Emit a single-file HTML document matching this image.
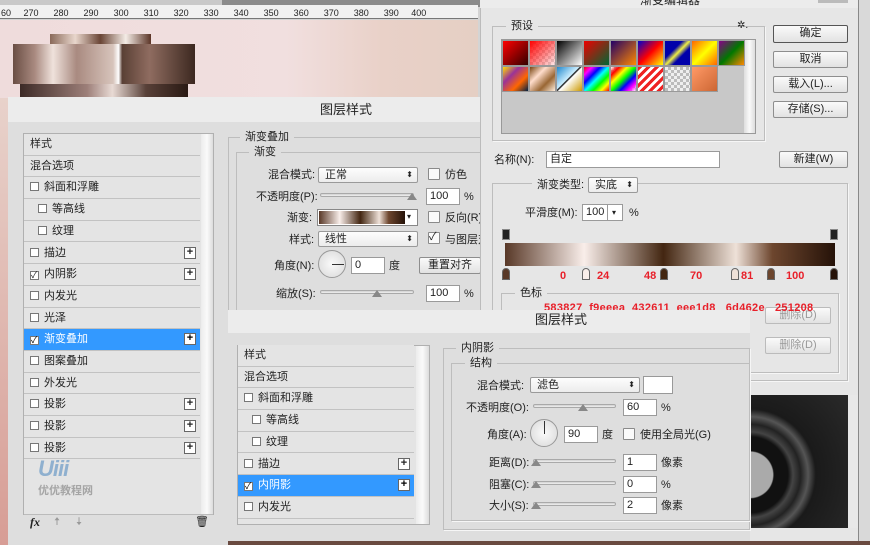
<!DOCTYPE html>
<html><head><meta charset="utf-8">
<style>
*{box-sizing:border-box;margin:0;padding:0}
body{width:870px;height:545px;position:relative;overflow:hidden;background:#d4d4d4;font-family:"Liberation Sans","Noto Sans CJK SC",sans-serif;font-size:11px;color:#222}
.a{position:absolute}
.t{position:absolute;white-space:nowrap;line-height:12px}
.fs{position:absolute;border:1px solid #bdbdbd;box-shadow:1px 1px 0 #f6f6f6}
.lg{position:absolute;background:inherit;padding:0 5px;line-height:12px}
.in{position:absolute;background:#fff;border:1px solid #9a9a9a;height:17px;line-height:15px;padding-left:3px}
.btn{position:absolute;border:1px solid #8e8e8e;border-radius:2px;background:linear-gradient(#fafafa,#e2e2e2);text-align:center;line-height:15px;height:17px}
.sel{position:absolute;border:1px solid #9a9a9a;border-radius:2px;background:linear-gradient(#fdfdfd,#ececec);height:16px;line-height:14px;padding-left:6px}
.sel:after{content:"⬍";position:absolute;right:4px;top:0;font-size:8px}
.cb{position:absolute;width:12px;height:12px;border:1px solid #8a8a8a;background:#fafafa;border-radius:1px}
.sl{position:absolute;height:4px;border:1px solid #a9a9a9;border-radius:2px;background:linear-gradient(#d0d0d0,#f0f0f0)}
.tri{position:absolute;width:0;height:0;border-left:5px solid transparent;border-right:5px solid transparent;border-bottom:7px solid #888}
.row{position:absolute;left:0;width:176px;height:21.7px;border-bottom:1px solid #c2c2c2;background:#e4e4e4;line-height:21px;padding-left:6px}
.row .c{display:inline-block;width:9px;height:9px;border:1px solid #777;background:#fff;margin-right:5px;vertical-align:-1px}
.plus{position:absolute;right:4px;top:4px;width:12px;height:12px;border:1px solid #666;background:#fff;font-size:11px;line-height:9px;text-align:center;font-weight:bold}
.sel2{background:#3399ff;color:#fff}
.red{color:#e8202a;font-weight:bold;font-size:11px}
.sw{position:absolute;width:27px;height:26px;border:1px solid #999}
</style></head><body>

<div class="a" style="left:0;top:0;width:870px;height:7px;background:#8b8b8b"></div>
<div class="a" style="left:0;top:0;width:222px;height:5px;background:#c9c9c9"></div>
<div class="a" style="left:0;top:5px;width:478px;height:14px;background:#f1f1f1;border-bottom:1px solid #777"></div>
<div class="t" style="left:1px;top:7px;font-size:9px;letter-spacing:0">60&nbsp;&nbsp;&nbsp;&nbsp;&nbsp;270&nbsp;&nbsp;&nbsp;&nbsp;&nbsp;&nbsp;280&nbsp;&nbsp;&nbsp;&nbsp;&nbsp;&nbsp;290&nbsp;&nbsp;&nbsp;&nbsp;&nbsp;&nbsp;300&nbsp;&nbsp;&nbsp;&nbsp;&nbsp;&nbsp;310&nbsp;&nbsp;&nbsp;&nbsp;&nbsp;&nbsp;320&nbsp;&nbsp;&nbsp;&nbsp;&nbsp;&nbsp;330&nbsp;&nbsp;&nbsp;&nbsp;&nbsp;&nbsp;340&nbsp;&nbsp;&nbsp;&nbsp;&nbsp;&nbsp;350&nbsp;&nbsp;&nbsp;&nbsp;&nbsp;&nbsp;360&nbsp;&nbsp;&nbsp;&nbsp;&nbsp;&nbsp;370&nbsp;&nbsp;&nbsp;&nbsp;&nbsp;&nbsp;380&nbsp;&nbsp;&nbsp;&nbsp;&nbsp;&nbsp;390&nbsp;&nbsp;&nbsp;&nbsp;&nbsp;400</div>
<div class="a" style="left:0;top:20px;width:478px;height:78px;background:linear-gradient(90deg,#efdcdc 0%,#f1dfdf 60%,#e9d1c8 80%,#e5cfc4 100%)"></div>
<div class="a" style="left:0;top:98px;width:8px;height:447px;background:linear-gradient(#e8d2cb,#d79d95)"></div>
<div class="a" style="left:50px;top:34px;width:101px;height:11px;background:linear-gradient(90deg,#8a6a5a,#e8d6cc,#6a4535,#f4ece6,#5b3426)"></div>
<div class="a" style="left:13px;top:44px;width:182px;height:40px;background:linear-gradient(90deg,#6a4e44 0%,#a98a80 12%,#efe2dc 22%,#a98a80 35%,#d7c4bb 55%,#fff 58%,#5a4035 60%,#8f6c60 75%,#3c2820 100%)"></div>
<div class="a" style="left:20px;top:84px;width:168px;height:14px;background:linear-gradient(90deg,#3c2a26,#9d7f79 40%,#e8dad4 55%,#584038 75%,#2a1a14)"></div>

<div class="a" style="left:8px;top:97px;width:472px;height:448px;background:#dedede"></div>
<div class="a" style="left:8px;top:97px;width:472px;height:25px;background:#ececec"></div>
<div class="t" style="left:320px;top:104px;font-size:13px">图层样式</div>
<div class="a" style="left:23px;top:133px;width:191px;height:382px;border:1px solid #b0b0b0;background:#e4e4e4"></div>
<div class="a" style="left:201px;top:134px;width:12px;height:380px;background:linear-gradient(90deg,#ececec,#fafafa,#dcdcdc)"></div>
<div class="a" style="left:24px;top:134px;width:176px;height:330px">
<div class="row" style="top:0">样式</div>
<div class="row" style="top:21.7px">混合选项</div>
<div class="row" style="top:43.4px"><span class="c"></span>斜面和浮雕</div>
<div class="row" style="top:65.1px;padding-left:14px"><span class="c"></span>等高线</div>
<div class="row" style="top:86.8px;padding-left:14px"><span class="c"></span>纹理</div>
<div class="row" style="top:108.5px"><span class="c"></span>描边<span class="plus">+</span></div>
<div class="row" style="top:130.2px"><span class="c" style="font-size:9px;line-height:7px">✓</span>内阴影<span class="plus">+</span></div>
<div class="row" style="top:151.9px"><span class="c"></span>内发光</div>
<div class="row" style="top:173.6px"><span class="c"></span>光泽</div>
<div class="row sel2" style="top:195.3px"><span class="c" style="font-size:9px;line-height:7px;color:#000">✓</span>渐变叠加<span class="plus" style="color:#000">+</span></div>
<div class="row" style="top:217px"><span class="c"></span>图案叠加</div>
<div class="row" style="top:238.7px"><span class="c"></span>外发光</div>
<div class="row" style="top:260.4px"><span class="c"></span>投影<span class="plus">+</span></div>
<div class="row" style="top:282.1px"><span class="c"></span>投影<span class="plus">+</span></div>
<div class="row" style="top:303.8px"><span class="c"></span>投影<span class="plus">+</span></div>
</div>
<div class="t" style="left:38px;top:463px;font-size:22px;font-weight:bold;font-style:italic;color:#8fb0cf;letter-spacing:-1px">Uiii</div>
<div class="t" style="left:38px;top:485px;font-size:11px;font-weight:bold;color:#a5a5a5">优优教程网</div>
<div class="a" style="left:24px;top:514px;width:189px;height:1px;background:#bbb"></div>
<div class="t" style="left:30px;top:516px;font-size:12px;font-style:italic;font-weight:bold;font-family:'Liberation Serif',serif">fx</div>
<div class="t" style="left:54px;top:516px;color:#999">🠅</div>
<div class="t" style="left:76px;top:516px;color:#999">🠇</div>
<div class="t" style="left:195px;top:516px;">🗑</div>

<div class="fs" style="left:228px;top:137px;width:260px;height:175px;background:#dedede"></div>
<div class="lg" style="left:240px;top:131px;background:#dedede">渐变叠加</div>
<div class="fs" style="left:236px;top:152px;width:252px;height:160px;background:#dedede"></div>
<div class="lg" style="left:249px;top:146px;background:#dedede">渐变</div>
<div class="t" style="left:268px;top:169px">混合模式:</div>
<div class="sel" style="left:318px;top:167px;width:100px">正常</div>
<div class="cb" style="left:428px;top:168px"></div><div class="t" style="left:445px;top:169px">仿色</div>
<div class="t" style="left:256px;top:191px">不透明度(P):</div>
<div class="sl" style="left:320px;top:193px;width:94px"></div><div class="tri" style="left:407px;top:193px"></div>
<div class="in" style="left:426px;top:188px;width:34px">100</div><div class="t" style="left:464px;top:191px">%</div>
<div class="t" style="left:287px;top:212px">渐变:</div>
<div class="a" style="left:317px;top:209px;width:101px;height:17px;border:1px solid #888;background:#fff"><div style="position:absolute;left:1px;top:1px;width:86px;height:13px;background:linear-gradient(90deg,#583827 0%,#f9eeea 24%,#432611 48%,#eee1d8 70%,#6d462e 81%,#251208 100%)"></div><div class="t" style="left:89px;top:1px;font-size:8px">▾</div></div>
<div class="cb" style="left:428px;top:211px"></div><div class="t" style="left:445px;top:212px">反向(R)</div>
<div class="t" style="left:289px;top:234px">样式:</div>
<div class="sel" style="left:318px;top:231px;width:100px">线性</div>
<div class="cb" style="left:428px;top:232px;font-size:11px;line-height:9px">✓</div><div class="t" style="left:445px;top:234px">与图层对</div>
<div class="t" style="left:274px;top:260px">角度(N):</div>
<div class="a" style="left:318px;top:250px;width:28px;height:28px;border-radius:50%;border:1px solid #999;background:radial-gradient(#fafafa,#d8d8d8)"><div style="position:absolute;left:13px;top:13px;width:12px;height:1px;background:#333"></div></div>
<div class="in" style="left:351px;top:257px;width:34px">0</div><div class="t" style="left:389px;top:260px">度</div>
<div class="btn" style="left:419px;top:257px;width:62px">重置对齐</div>
<div class="t" style="left:276px;top:288px">缩放(S):</div>
<div class="sl" style="left:320px;top:290px;width:94px"></div><div class="tri" style="left:372px;top:290px"></div>
<div class="in" style="left:426px;top:285px;width:34px">100</div><div class="t" style="left:464px;top:288px">%</div>

<div class="a" style="left:480px;top:0;width:378px;height:395px;background:#e6e6e6;border-left:1px solid #bbb"></div>
<div class="a" style="left:480px;top:0;width:378px;height:8px;background:#ececec"></div>
<div class="t" style="left:640px;top:-6px;font-size:12px">渐变编辑器</div>
<div class="a" style="left:818px;top:0;width:30px;height:3px;background:#bbb"></div>
<div class="fs" style="left:492px;top:26px;width:273px;height:115px;background:#e6e6e6"></div>
<div class="lg" style="left:506px;top:20px;background:#e6e6e6">预设</div>
<div class="t" style="left:737px;top:20px;font-size:10px">✲.</div>
<div class="a" style="left:501px;top:39px;width:255px;height:95px;background:#c8c8c8;border:1px solid #999"></div>
<div class="a" style="left:744px;top:40px;width:11px;height:93px;background:linear-gradient(90deg,#ddd,#fafafa,#ddd)"></div>
<div class="sw" style="left:502px;top:40px;background:linear-gradient(135deg,#f00,#300)"></div>
<div class="sw" style="left:529px;top:40px;background:linear-gradient(135deg,#f00,rgba(255,200,200,.4)),repeating-conic-gradient(#ccc 0 25%,#fff 0 50%) 0 0/6px 6px"></div>
<div class="sw" style="left:556px;top:40px;background:linear-gradient(135deg,#000,#fff)"></div>
<div class="sw" style="left:583px;top:40px;background:linear-gradient(135deg,#e00,#063)"></div>
<div class="sw" style="left:610px;top:40px;background:linear-gradient(135deg,#206,#f80)"></div>
<div class="sw" style="left:637px;top:40px;background:linear-gradient(135deg,#00c,#f00,#ff0)"></div>
<div class="sw" style="left:664px;top:40px;background:linear-gradient(135deg,#00a 35%,#ee4 50%,#00a 65%)"></div>
<div class="sw" style="left:691px;top:40px;background:linear-gradient(135deg,#f60,#ff0,#f60)"></div>
<div class="sw" style="left:718px;top:40px;background:linear-gradient(135deg,#808,#070,#f80)"></div>
<div class="sw" style="left:502px;top:66px;background:linear-gradient(135deg,#fd0,#939,#f60,#024)"></div>
<div class="sw" style="left:529px;top:66px;background:linear-gradient(135deg,#741,#fdc,#963,#fed)"></div>
<div class="sw" style="left:556px;top:66px;background:linear-gradient(135deg,#28c,#cef 45%,#000 48%,#fff 52%,#c90)"></div>
<div class="sw" style="left:583px;top:66px;background:linear-gradient(135deg,#f00,#f0f,#00f,#0ff,#0f0,#ff0,#f00)"></div>
<div class="sw" style="left:610px;top:66px;background:linear-gradient(135deg,transparent,#f00,#ff0,#0f0,#00f,#f0f,transparent),repeating-conic-gradient(#ccc 0 25%,#fff 0 50%) 0 0/6px 6px"></div>
<div class="sw" style="left:637px;top:66px;background:repeating-linear-gradient(135deg,#e22 0 3px,#fff 3px 6px)"></div>
<div class="sw" style="left:664px;top:66px;background:repeating-conic-gradient(#bbb 0 25%,#eee 0 50%) 0 0/6px 6px"></div>
<div class="sw" style="left:691px;top:66px;background:linear-gradient(135deg,#f96,#c63)"></div>
<div class="btn" style="left:773px;top:25px;width:75px;height:18px;border-color:#555">确定</div>
<div class="btn" style="left:773px;top:51px;width:75px">取消</div>
<div class="btn" style="left:773px;top:76px;width:75px">载入(L)...</div>
<div class="btn" style="left:773px;top:101px;width:75px">存储(S)...</div>
<div class="t" style="left:494px;top:154px">名称(N):</div>
<div class="in" style="left:546px;top:151px;width:174px">自定</div>
<div class="btn" style="left:779px;top:151px;width:69px">新建(W)</div>
<div class="fs" style="left:492px;top:183px;width:356px;height:198px;background:#e6e6e6"></div>
<div class="lg" style="left:532px;top:179px;background:#e6e6e6">渐变类型:</div>
<div class="sel" style="left:588px;top:177px;width:50px">实底</div>
<div class="t" style="left:525px;top:207px">平滑度(M):</div>
<div class="in" style="left:582px;top:204px;width:41px">100<span style="position:absolute;left:24px;top:0;border-left:1px solid #999;padding-left:4px;font-size:8px">▾</span></div>
<div class="t" style="left:629px;top:207px">%</div>
<div class="a" style="left:502px;top:229px;width:8px;height:11px;background:#222;border:1px solid #888"></div>
<div class="a" style="left:830px;top:229px;width:8px;height:11px;background:#222;border:1px solid #888"></div>
<div class="a" style="left:505px;top:243px;width:330px;height:23px;background:linear-gradient(90deg,#583827 0%,#f9eeea 24%,#432611 48%,#eee1d8 70%,#6d462e 81%,#251208 100%)"></div>
<div class="a" style="left:502px;top:268px;width:8px;height:12px;background:#583827;border:1px solid #666;border-top-left-radius:4px;border-top-right-radius:4px"></div>
<div class="a" style="left:582px;top:268px;width:8px;height:12px;background:#f9eeea;border:1px solid #666;border-top-left-radius:4px;border-top-right-radius:4px"></div>
<div class="a" style="left:660px;top:268px;width:8px;height:12px;background:#432611;border:1px solid #666;border-top-left-radius:4px;border-top-right-radius:4px"></div>
<div class="a" style="left:731px;top:268px;width:8px;height:12px;background:#eee1d8;border:1px solid #666;border-top-left-radius:4px;border-top-right-radius:4px"></div>
<div class="a" style="left:767px;top:268px;width:8px;height:12px;background:#6d462e;border:1px solid #666;border-top-left-radius:4px;border-top-right-radius:4px"></div>
<div class="a" style="left:830px;top:268px;width:8px;height:12px;background:#251208;border:1px solid #666;border-top-left-radius:4px;border-top-right-radius:4px"></div>
<div class="t red" style="left:560px;top:270px">0</div>
<div class="t red" style="left:597px;top:270px">24</div>
<div class="t red" style="left:644px;top:270px">48</div>
<div class="t red" style="left:690px;top:270px">70</div>
<div class="t red" style="left:741px;top:270px">81</div>
<div class="t red" style="left:786px;top:270px">100</div>
<div class="fs" style="left:501px;top:293px;width:338px;height:80px;background:#e6e6e6"></div>
<div class="lg" style="left:515px;top:287px;background:#e6e6e6">色标</div>
<div class="btn" style="left:765px;top:307px;width:66px;color:#999;border-color:#bbb">删除(D)</div>
<div class="btn" style="left:765px;top:337px;width:66px;color:#999;border-color:#bbb">删除(D)</div>
<div class="t red" style="left:544px;top:302px;letter-spacing:0.3px">583827&nbsp;&nbsp;f9eeea&nbsp;&nbsp;432611&nbsp;&nbsp;eee1d8&nbsp;&nbsp;&nbsp;6d462e&nbsp;&nbsp;&nbsp;251208</div>
<div class="a" style="left:858px;top:0;width:12px;height:545px;background:#d9d9d9;border-left:1px solid #888"></div>
<div class="a" style="left:750px;top:395px;width:98px;height:133px;background:radial-gradient(circle at 0% 60%,#aaa 0 18%,#111 19% 30%,#444 34%,#222 40%,#555 46%,#1a1a1a 52%,#2a2a2a 100%)"></div>
<div class="a" style="left:848px;top:395px;width:10px;height:133px;background:#e8e8e8"></div>
<div class="a" style="left:750px;top:528px;width:108px;height:17px;background:#e6e6e6"></div>

<div class="a" style="left:228px;top:310px;width:522px;height:235px;background:#dedede"></div>
<div class="a" style="left:228px;top:310px;width:522px;height:23px;background:#ececec"></div>
<div class="t" style="left:535px;top:314px;font-size:13px">图层样式</div>
<div class="a" style="left:237px;top:345px;width:193px;height:180px;border:1px solid #b0b0b0;background:#e4e4e4"></div>
<div class="a" style="left:416px;top:346px;width:13px;height:178px;background:linear-gradient(90deg,#ececec,#fafafa,#dcdcdc)"></div>
<div class="a" style="left:238px;top:345px;width:176px;height:180px">
<div class="row" style="top:0">样式</div>
<div class="row" style="top:21.7px">混合选项</div>
<div class="row" style="top:43.4px"><span class="c"></span>斜面和浮雕</div>
<div class="row" style="top:65.1px;padding-left:14px"><span class="c"></span>等高线</div>
<div class="row" style="top:86.8px;padding-left:14px"><span class="c"></span>纹理</div>
<div class="row" style="top:108.5px"><span class="c"></span>描边<span class="plus">+</span></div>
<div class="row sel2" style="top:130.2px"><span class="c" style="font-size:9px;line-height:7px;color:#000">✓</span>内阴影<span class="plus" style="color:#000">+</span></div>
<div class="row" style="top:151.9px"><span class="c"></span>内发光</div>
</div>
<div class="fs" style="left:443px;top:348px;width:307px;height:182px;background:#dedede"></div>
<div class="lg" style="left:456px;top:342px;background:#dedede">内阴影</div>
<div class="fs" style="left:451px;top:363px;width:299px;height:158px;background:#dedede"></div>
<div class="lg" style="left:465px;top:357px;background:#dedede">结构</div>
<div class="t" style="left:477px;top:380px">混合模式:</div>
<div class="sel" style="left:530px;top:377px;width:110px">滤色</div>
<div class="a" style="left:643px;top:376px;width:30px;height:18px;background:#fff;border:1px solid #999"></div>
<div class="t" style="left:466px;top:402px">不透明度(O):</div>
<div class="sl" style="left:533px;top:404px;width:83px"></div><div class="tri" style="left:578px;top:404px"></div>
<div class="in" style="left:623px;top:399px;width:34px">60</div><div class="t" style="left:661px;top:402px">%</div>
<div class="t" style="left:487px;top:429px">角度(A):</div>
<div class="a" style="left:530px;top:419px;width:28px;height:28px;border-radius:50%;border:1px solid #999;background:radial-gradient(#fafafa,#d8d8d8)"><div style="position:absolute;left:13px;top:1px;width:1px;height:13px;background:#333"></div></div>
<div class="in" style="left:564px;top:426px;width:34px">90</div><div class="t" style="left:602px;top:429px">度</div>
<div class="cb" style="left:623px;top:428px"></div><div class="t" style="left:640px;top:429px">使用全局光(G)</div>
<div class="t" style="left:489px;top:457px">距离(D):</div>
<div class="sl" style="left:533px;top:459px;width:83px"></div><div class="tri" style="left:531px;top:459px"></div>
<div class="in" style="left:623px;top:454px;width:34px">1</div><div class="t" style="left:661px;top:457px">像素</div>
<div class="t" style="left:489px;top:479px">阻塞(C):</div>
<div class="sl" style="left:533px;top:481px;width:83px"></div><div class="tri" style="left:531px;top:481px"></div>
<div class="in" style="left:623px;top:476px;width:34px">0</div><div class="t" style="left:661px;top:479px">%</div>
<div class="t" style="left:489px;top:500px">大小(S):</div>
<div class="sl" style="left:533px;top:502px;width:83px"></div><div class="tri" style="left:531px;top:502px"></div>
<div class="in" style="left:623px;top:497px;width:34px">2</div><div class="t" style="left:661px;top:500px">像素</div>
<div class="a" style="left:228px;top:541px;width:642px;height:4px;background:#6a4a40"></div>
</body></html>
